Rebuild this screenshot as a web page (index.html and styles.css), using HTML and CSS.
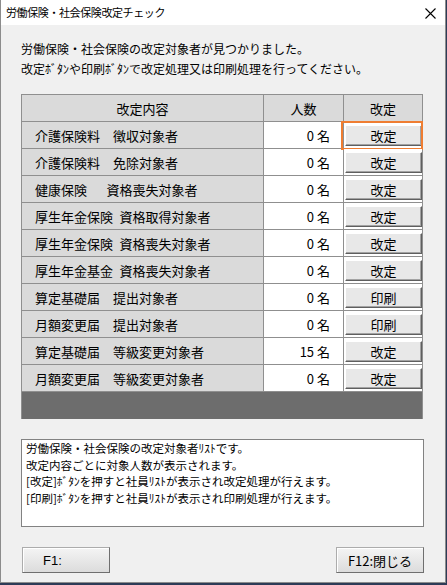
FILE: index.html
```html
<!DOCTYPE html>
<html lang="ja">
<head>
<meta charset="utf-8">
<title>労働保険・社会保険改定チェック</title>
<link rel="stylesheet" href="styles.css">
</head>
<body>
<div class="window">
  <div class="titlebar">
    <span class="title">労働保険・社会保険改定チェック</span>
    <svg class="close" width="11" height="11" viewBox="0 0 11 11"><path d="M0.5 0.5 L10.5 10.5 M10.5 0.5 L0.5 10.5" stroke="#000" stroke-width="1.1" fill="none"/></svg>
  </div>
  <div class="content">
    <div class="message">
      <div>労働保険・社会保険の改定対象者が見つかりました。</div>
      <div>改定ﾎﾞﾀﾝや印刷ﾎﾞﾀﾝで改定処理又は印刷処理を行ってください。</div>
    </div>
    <div class="grid">
      <div class="cell head">改定内容</div>
      <div class="cell head">人数</div>
      <div class="cell head">改定</div>

      <div class="cell name">介護保険料　徴収対象者</div>
      <div class="cell count">0 名</div>
      <div class="cell act focused"><span class="btn">改定</span></div>

      <div class="cell name">介護保険料　免除対象者</div>
      <div class="cell count">0 名</div>
      <div class="cell act"><span class="btn">改定</span></div>

      <div class="cell name">健康保険　&#8194;資格喪失対象者</div>
      <div class="cell count">0 名</div>
      <div class="cell act"><span class="btn">改定</span></div>

      <div class="cell name">厚生年金保険&#8194;資格取得対象者</div>
      <div class="cell count">0 名</div>
      <div class="cell act"><span class="btn">改定</span></div>

      <div class="cell name">厚生年金保険&#8194;資格喪失対象者</div>
      <div class="cell count">0 名</div>
      <div class="cell act"><span class="btn">改定</span></div>

      <div class="cell name">厚生年金基金&#8194;資格喪失対象者</div>
      <div class="cell count">0 名</div>
      <div class="cell act"><span class="btn">改定</span></div>

      <div class="cell name">算定基礎届　提出対象者</div>
      <div class="cell count">0 名</div>
      <div class="cell act"><span class="btn">印刷</span></div>

      <div class="cell name">月額変更届　提出対象者</div>
      <div class="cell count">0 名</div>
      <div class="cell act"><span class="btn">印刷</span></div>

      <div class="cell name">算定基礎届　等級変更対象者</div>
      <div class="cell count">15 名</div>
      <div class="cell act"><span class="btn">改定</span></div>

      <div class="cell name">月額変更届　等級変更対象者</div>
      <div class="cell count">0 名</div>
      <div class="cell act"><span class="btn">改定</span></div>

      <div class="band"></div>
    </div>
    <div class="notes">
      <div>労働保険・社会保険の改定対象者ﾘｽﾄです。</div>
      <div>改定内容ごとに対象人数が表示されます。</div>
      <div>[改定]ﾎﾞﾀﾝを押すと社員ﾘｽﾄが表示され改定処理が行えます。</div>
      <div>[印刷]ﾎﾞﾀﾝを押すと社員ﾘｽﾄが表示され印刷処理が行えます。</div>
    </div>
    <div class="footer">
      <span class="fbtn f1">F1:</span>
      <span class="fbtn f12">F12:閉じる</span>
    </div>
  </div>
</div>
<div class="desktop"></div>
</body>
</html>
```
FILE: styles.css
```css
html, body {
  margin: 0;
  padding: 0;
}
body {
  width: 447px;
  height: 585px;
  background: #2d3b57;
  font-family: "Noto Sans CJK JP", "Noto Sans", sans-serif;
  color: #000;
  overflow: hidden;
}
.window {
  box-sizing: border-box;
  width: 446px;
  height: 583px;
  background: #f0f0f0;
  border: 1px solid #8c8c8c;
  border-top: none;
}
.titlebar {
  height: 25px;
  background: #fff;
  display: flex;
  align-items: center;
  justify-content: space-between;
  padding: 0 9px 0 5px;
}
.title {
  font-size: 11px;
  letter-spacing: -0.4px;
  line-height: 25px;
}
.close {
  display: block;
  margin-top: 1px;
}
.content {
  padding: 14px 0 0 20px;
}
.message {
  font-size: 12px;
  line-height: 20px;
}
.grid {
  margin-top: 15px;
  width: 402px;
  box-sizing: border-box;
  display: grid;
  grid-template-columns: 241px 79px 78px;
  grid-auto-rows: 26px;
  gap: 1px;
  padding: 1px;
  background: #8f8f8f;
}
.cell {
  display: flex;
  align-items: center;
  font-size: 13px;
  white-space: pre;
}
.head {
  background: #dadada;
  justify-content: center;
}
.name {
  background: #dadada;
  padding-left: 13px;
}
.count {
  background: #fff;
  justify-content: flex-end;
  padding-right: 13px;
}
.act {
  background: #fff;
  justify-content: center;
  position: relative;
}
.focused::after {
  content: "";
  position: absolute;
  top: -1px;
  left: -3px;
  right: -1px;
  bottom: -2px;
  border: 2px solid #ef7d31;
}
.btn {
  box-sizing: border-box;
  width: 77px;
  height: 21px;
  margin-left: 1px;
  margin-top: 1px;
  background: #e8e8e8;
  border-top: 1px solid #fff;
  border-left: 1px solid #fff;
  border-right: 1px solid #5f5f5f;
  border-bottom: 1px solid #5f5f5f;
  box-shadow: inset -1px -1px 0 #a3a3a3;
  display: flex;
  align-items: center;
  justify-content: center;
  font-size: 13px;
  line-height: 1;
}
.band {
  grid-column: 1 / 4;
  height: 27px;
  background: #6d6d6d;
}
.notes {
  margin-top: 20px;
  box-sizing: border-box;
  width: 403px;
  height: 88px;
  background: #fff;
  border: 1px solid #828282;
  padding: 0 4px;
  font-size: 11.5px;
  line-height: 16.7px;
}
.footer {
  margin-top: 20px;
  width: 403px;
  display: flex;
  justify-content: space-between;
}
.fbtn {
  box-sizing: border-box;
  width: 88px;
  height: 26px;
  display: flex;
  align-items: center;
  font-size: 13px;
  background: linear-gradient(#f4f4f4, #dcdcdc);
  border: 1px solid #acacac;
  border-right-color: #6f6f6f;
  border-bottom-color: #6f6f6f;
  box-shadow: inset 1px 1px 0 #fff;
}
.f1 {
  margin-left: 1px;
  padding-left: 20px;
  font-family: "Liberation Sans", "Noto Sans CJK JP", sans-serif;
}
.f12 {
  justify-content: center;
}
.desktop {
  height: 2px;
}
```
